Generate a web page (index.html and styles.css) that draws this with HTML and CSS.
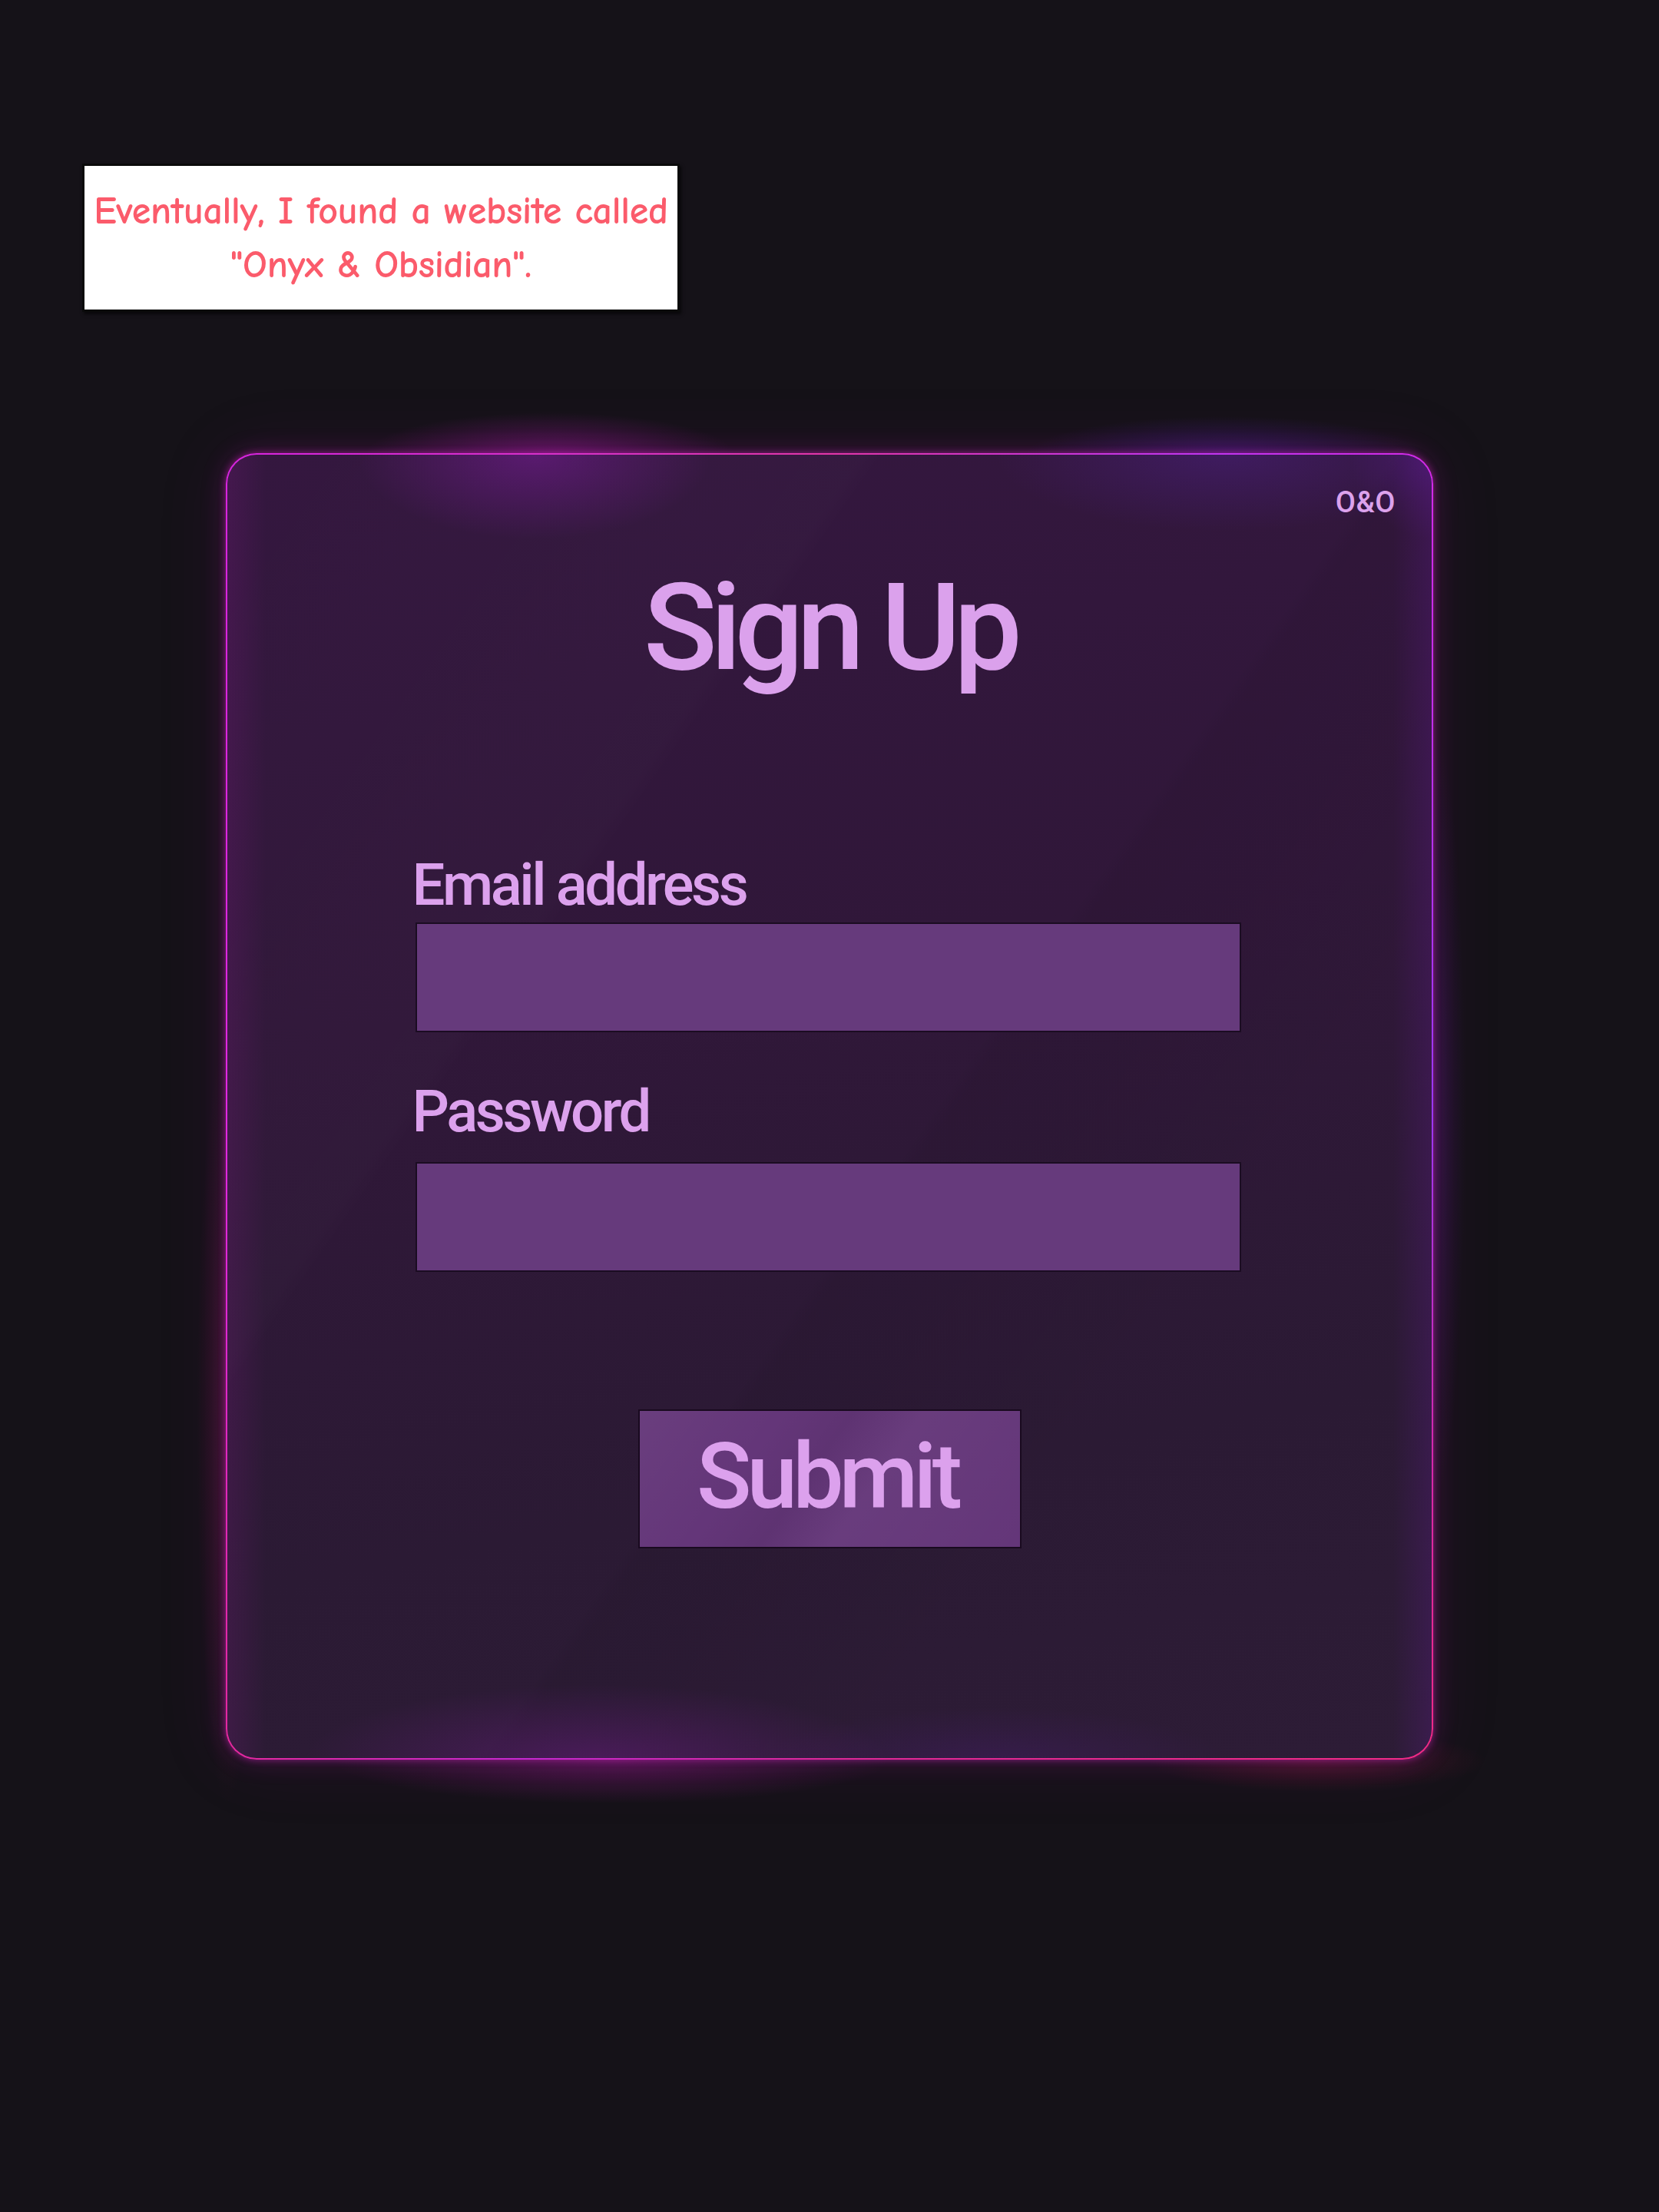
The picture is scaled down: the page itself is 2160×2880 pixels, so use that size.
FILE: index.html
```html
<!DOCTYPE html>
<html lang="en">
<head>
<meta charset="utf-8">
<title>Onyx &amp; Obsidian – Sign Up</title>
<link rel="stylesheet" href="styles.css">
</head>
<body>
<div class="page">
  <div class="caption">
    <p>Eventually, I found a website called<br>"Onyx &amp; Obsidian".</p>
  </div>

  <form class="card">
    <div class="brand">O&amp;O</div>
    <h1 class="title">Sign Up</h1>
    <div class="fields">
      <label class="label label-email" for="email">Email address</label>
      <input class="input" id="email" type="email">
      <label class="label label-pass" for="pass">Password</label>
      <input class="input" id="pass" type="password">
    </div>
    <div class="actions">
      <button class="submit" type="button">Submit</button>
    </div>
  </form>
</div>
</body>
</html>
```

FILE: styles.css
```css
* { box-sizing: border-box; }

html {
  margin: 0;
  padding: 0;
  background: #151218;
}

body {
  margin: 0;
  padding: 0;
  width: 2160px;
  min-height: 2880px;
  font-family: Roboto, "Liberation Sans", sans-serif;
}

.page {
  display: flex;
  flex-direction: column;
  align-items: flex-start;
  padding-top: 213px;
}

/* caption panel */
.caption {
  margin-left: 107px;
  width: 778px;
  height: 193px;
  background: #ffffff;
  border: 3px solid #0a0a0a;
  display: flex;
  align-items: center;
  justify-content: center;
  box-shadow: 2px 3px 4px rgba(0,0,0,0.6);
}

.caption p {
  margin: 0;
  text-align: center;
  font-family: "Comic Sans MS", "Comic Neue", Lato, sans-serif;
  font-size: 50px;
  font-weight: 700;
  line-height: 70px;
  color: #fb5b6b;
  letter-spacing: -0.3px;
}

/* card */
.card {
  position: relative;
  margin-top: 184px;
  margin-left: 294px;
  width: 1572px;
  height: 1701px;
  border-radius: 40px;
  border: 2.5px solid transparent;
  background:
    radial-gradient(ellipse 230px 110px at 400px 0px, rgba(150, 30, 190, 0.38), rgba(150,30,190,0) 100%) padding-box,
    radial-gradient(ellipse 300px 100px at 1300px 0px, rgba(100, 40, 200, 0.25), rgba(100,40,200,0) 100%) padding-box,
    radial-gradient(ellipse 110px 110px at 1572px 0px, rgba(120, 30, 200, 0.28), rgba(120,30,200,0) 100%) padding-box,
    radial-gradient(ellipse 380px 100px at 480px 1701px, rgba(140, 30, 170, 0.32), rgba(140,30,170,0) 100%) padding-box,
    radial-gradient(ellipse 300px 70px at 1000px 1701px, rgba(90, 30, 150, 0.22), rgba(90,30,150,0) 100%) padding-box,
    linear-gradient(90deg, rgba(190,30,190,0.12) 0px, rgba(190,30,190,0) 50px) padding-box,
    linear-gradient(270deg, rgba(130,30,200,0.16) 0px, rgba(130,30,200,0) 50px) padding-box,
    linear-gradient(125deg, rgba(255,255,255,0) 0%, rgba(255,255,255,0.012) 30%, rgba(255,255,255,0) 31%, rgba(255,255,255,0) 55%, rgba(0,0,0,0.05) 56%, rgba(0,0,0,0) 75%) padding-box,
    linear-gradient(170deg, #34173f 0%, #301739 40%, #2b1a34 75%, #2d1c36 100%) padding-box,
    conic-gradient(from 0deg at 50% 50%,
      #e236a8 0deg, #c035f0 30deg, #d42ae8 43deg, #9a38f5 90deg,
      #d428ac 120deg, #f02a86 137deg, #dc2898 180deg, #c428d0 205deg,
      #e4289e 223deg, #e028d4 250deg, #e228e4 270deg, #d824e0 317deg,
      #d832c6 340deg, #e236a8 360deg) border-box;
  box-shadow:
    0 0 10px 0 rgba(230, 40, 210, 0.5),
    0 0 32px 2px rgba(190, 30, 180, 0.2),
    0 0 90px 6px rgba(150, 20, 150, 0.1);
  display: flex;
  flex-direction: column;
  align-items: center;
}

/* outer neon glow blooms hugging the card edge (decoration) */
.card::before {
  content: "";
  position: absolute;
  left: -140px;
  top: -140px;
  right: -140px;
  bottom: -140px;
  z-index: -1;
  pointer-events: none;
  background:
    radial-gradient(ellipse 240px 55px at 560px 140px, rgba(180, 25, 180, 0.42), rgba(180,25,180,0) 100%),
    radial-gradient(ellipse 260px 50px at 1440px 140px, rgba(100, 35, 200, 0.36), rgba(100,35,200,0) 100%),
    radial-gradient(ellipse 360px 55px at 640px 1841px, rgba(170, 25, 160, 0.36), rgba(170,25,160,0) 100%),
    radial-gradient(ellipse 220px 40px at 1560px 1841px, rgba(200, 25, 80, 0.25), rgba(200,25,80,0) 100%),
    radial-gradient(ellipse 40px 500px at 140px 1400px, rgba(200, 25, 110, 0.18), rgba(200,25,110,0) 100%),
    radial-gradient(ellipse 40px 500px at 1712px 1000px, rgba(120, 30, 200, 0.2), rgba(120,30,200,0) 100%);
}

.brand {
  align-self: flex-end;
  margin-top: 43px;
  margin-right: 47px;
  font-size: 38px;
  line-height: 1;
  font-weight: 500;
  color: #dca2ec;
  letter-spacing: 0.5px;
}

.title {
  margin: 65px 0 0 0;
  font-size: 158px;
  line-height: 1;
  font-weight: 500;
  color: #dba1ec;
  letter-spacing: -0.055em;
}

.fields {
  margin-top: 218px;
  width: 1079px;
  display: flex;
  flex-direction: column;
}

.label {
  font-size: 76px;
  line-height: 1;
  font-weight: 500;
  color: #dca1ed;
  letter-spacing: -0.045em;
  margin-left: -4px;
}

.label-pass {
  margin-top: 65px;
}

.input {
  display: block;
  width: 1075px;
  height: 143px;
  background: #663a7c;
  border: 2px solid #1b0c22;
  border-radius: 0;
  margin-top: 11px;
  outline: none;
  padding: 0 20px;
  font-size: 48px;
  color: #f0d8f8;
}

.label-pass + .input {
  margin-top: 28px;
}

.actions {
  margin-top: 179px;
  display: flex;
  justify-content: center;
  width: 100%;
}

.submit {
  width: 499px;
  height: 181px;
  background:
    linear-gradient(125deg, rgba(255,255,255,0.04) 0%, rgba(255,255,255,0) 30%, rgba(0,0,0,0.06) 45%, rgba(255,255,255,0.03) 60%, rgba(255,255,255,0) 100%),
    #643679;
  border: 2px solid #190a1f;
  border-radius: 0;
  font-family: Roboto, "Liberation Sans", sans-serif;
  font-size: 118px;
  line-height: 1;
  font-weight: 500;
  color: #dca1ed;
  letter-spacing: -0.05em;
  padding: 0 6px 6px 0;
  display: flex;
  align-items: center;
  justify-content: center;
}
```
